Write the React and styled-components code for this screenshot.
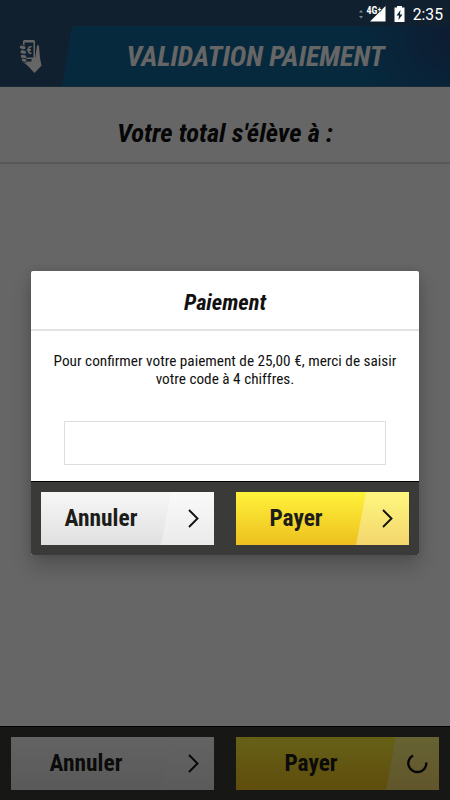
import React from 'react';
import styled, { createGlobalStyle, css } from 'styled-components';

const GlobalStyle = createGlobalStyle`
  * {
    box-sizing: border-box;
  }

  body {
    margin: 0;
    background: #666;
    font-family: 'Roboto Condensed', Roboto, sans-serif;
    font-stretch: 75%;
  }
`;

const Screen = styled.div`
  position: relative;
  display: flex;
  flex-direction: column;
  width: 450px;
  height: 800px;
  overflow: hidden;
  background: #fff;
`;

const StatusSpace = styled.div`
  height: 26px;
  background: #285074;
`;

const Header = styled.header`
  display: flex;
  height: 61px;
  background: #285074;
  border-bottom: 1px solid #3a6a8c;
`;

const HeaderIcon = styled.div`
  display: flex;
  align-items: center;
  width: 62px;
  padding: 0 0 0 19px;
`;

const HeaderTitle = styled.h1`
  flex: 1;
  margin: 0;
  padding-right: 1px;
  color: #fff;
  background: radial-gradient(circle at 100% 20%, #22477e 0, #0f6698 90px);
  clip-path: polygon(10px 0, 100% 0, 100% 100%, 0 100%);
  font-size: 28.1px;
  font-style: italic;
  font-weight: 700;
  line-height: 61px;
  text-align: center;
  white-space: nowrap;
`;

const Total = styled.h2`
  height: 77px;
  margin: 0;
  border-bottom: 2px solid #dcdcdc;
  font-size: 26.6px;
  font-style: italic;
  font-weight: 700;
  line-height: 92px;
  text-align: center;
  color: #111;
`;

const Footer = styled.footer`
  display: grid;
  grid-template-columns: 1fr 1fr;
  gap: 22px;
  height: 74px;
  margin-top: auto;
  padding: 10px ${props => props.$gutter}px 11px;
  background: #3a3a38;
  border-top: 1px solid #000;
`;

const yellow = css`
  background: linear-gradient(#fff23a, #edc01f);
`;

const grey = css`
  background: linear-gradient(#f7f7f7, #e0e0e0);
`;

const Button = styled.button`
  display: flex;
  height: 53px;
  padding: 0;
  border: 0;
  color: #1c1c1a;
  font: inherit;
  font-size: 23.4px;
  font-weight: 700;
  ${props => (props.$primary ? yellow : grey)}
`;

const Label = styled.span`
  flex: 1;
  line-height: 53px;
  text-align: center;
`;

const Corner = styled.span`
  display: flex;
  align-items: center;
  justify-content: flex-end;
  width: 53px;
  height: 53px;
  padding-right: ${props => props.$end || 15}px;
  background: rgba(255, 255, 255, ${props => props.$shine || 0.35});
  clip-path: polygon(10px 0, 100% 0, 100% 100%, 0 100%);
`;

const Overlay = styled.div`
  position: absolute;
  inset: 0;
  display: flex;
  flex-direction: column;
  background: rgba(0, 0, 0, .6);
`;

const StatusBar = styled.div`
  display: flex;
  align-items: center;
  justify-content: flex-end;
  height: 26px;
  padding: 2px 7px 0 0;
  color: #fff;
  font-family: Roboto, sans-serif;
  font-size: 15.700px;
  font-stretch: 100%;
`;

const Clock = styled.span`
  margin-left: 7px;
`;

const Dialog = styled.section`
  display: flex;
  flex-direction: column;
  width: 388px;
  height: 284px;
  margin: 245px 0 0 31px;
  overflow: hidden;
  background: #fff;
  border-radius: 2px;
  box-shadow: 0 12px 20px rgba(0, 0, 0, .2), 0 0 8px rgba(0, 0, 0, .12);
`;

const DialogTitle = styled.h3`
  height: 60px;
  margin: 0;
  border-bottom: 2px solid #e2e2e2;
  font-size: 22.4px;
  font-style: italic;
  font-weight: 700;
  line-height: 63px;
  text-align: center;
  color: #111;
`;

const Message = styled.p`
  margin: 21px 20px 0;
  font-size: 15.25px;
  line-height: 18px;
  text-align: center;
  color: #111;
`;

const CodeInput = styled.input`
  width: 322px;
  height: 44px;
  margin: 33px auto 0;
  border: 1px solid #dedede;
  background: #fff;
`;

const PhoneHand = () => (
  <svg width="23" height="33" viewBox="0 0 23 33" fill="#fff">
    <path
      fillRule="evenodd"
      d="M5.500 0h9q1.500 0 1.500 1.500v17.500L18 5.500q1.800-1 2 1L21 18l1.500 7.500L15.500 33 9 26l-5-4V1.500Q4 0 5.500 0ZM5.500 2.500v15h9v-15ZM8 19v2.500h4.500V19Z"
    />
    <g stroke="#285074" strokeWidth=".8">
      <rect x=".5" y="5.500" width="6.500" height="4" rx="2" transform="rotate(14 4 7)" />
      <rect x="1" y="10" width="6.500" height="4" rx="2" transform="rotate(14 4 12)" />
      <rect x="1.500" y="14.500" width="6.500" height="4" rx="2" transform="rotate(14 4 16)" />
      <rect x="2.500" y="18.500" width="5.500" height="3.500" rx="1.700" transform="rotate(14 5 20)" />
    </g>
    <text x="7.500" y="13.500" fontFamily="Roboto" fontSize="11" fontWeight="700">€</text>
  </svg>
);

const Chevron = () => (
  <svg width="11" height="19" viewBox="0 0 11 19" fill="none" stroke="#111" strokeWidth="1.900">
    <path d="M1 1l8.500 8.500L1 18" />
  </svg>
);

const Spinner = () => (
  <svg width="21" height="21" viewBox="0 0 21 21" fill="none" stroke="#111" strokeWidth="2.400">
    <path d="M6 2.500A9 8.800 0 1 0 19.300 9.500" />
  </svg>
);

const StatusIcons = () => (
  <svg width="47" height="20" viewBox="0 0 47 20" fill="#fff">
    <path d="M0 8.500l2-2.500 2 2.500ZM0 12h4l-2 2.500Z" opacity=".45" />
    <path d="M11 17.500L26.500 2v15.500Z" />
    <text
      x="7.500"
      y="9.500"
      fontFamily="Roboto"
      fontSize="10"
      fontWeight="700"
      fontStretch="75%"
      stroke="#10202e"
      strokeWidth="1"
      paintOrder="stroke"
    >
      4G<tspan fontSize="8" dy="-1.500">+</tspan>
    </text>
    <path
      fillRule="evenodd"
      d="M38 2h5v1.500h2.500V18h-10V3.500H38ZM41.500 6l-4 5.500H40L39.500 16l4-5.500H41Z"
    />
  </svg>
);

export default () =>
  (<Screen>
    <GlobalStyle />
    <StatusSpace />
    <Header>
      <HeaderIcon>
        <PhoneHand />
      </HeaderIcon>
      <HeaderTitle>VALIDATION PAIEMENT</HeaderTitle>
    </Header>
    <Total>Votre total s'élève à :</Total>
    <Footer $gutter={11}>
      <Button>
        <Label>Annuler</Label>
        <Corner $shine={0.12}><Chevron /></Corner>
      </Button>
      <Button $primary>
        <Label>Payer</Label>
        <Corner $end={11}><Spinner /></Corner>
      </Button>
    </Footer>
    <Overlay>
      <StatusBar>
        <StatusIcons />
        <Clock>2:35</Clock>
      </StatusBar>
      <Dialog>
        <DialogTitle>Paiement</DialogTitle>
        <Message>
          Pour confirmer votre paiement de 25,00 €, merci de saisir votre code à 4 chiffres.
        </Message>
        <CodeInput aria-label="Code" />
        <Footer $gutter={10}>
          <Button>
            <Label>Annuler</Label>
            <Corner><Chevron /></Corner>
          </Button>
          <Button $primary>
            <Label>Payer</Label>
            <Corner $end={16}><Chevron /></Corner>
          </Button>
        </Footer>
      </Dialog>
    </Overlay>
  </Screen>);
